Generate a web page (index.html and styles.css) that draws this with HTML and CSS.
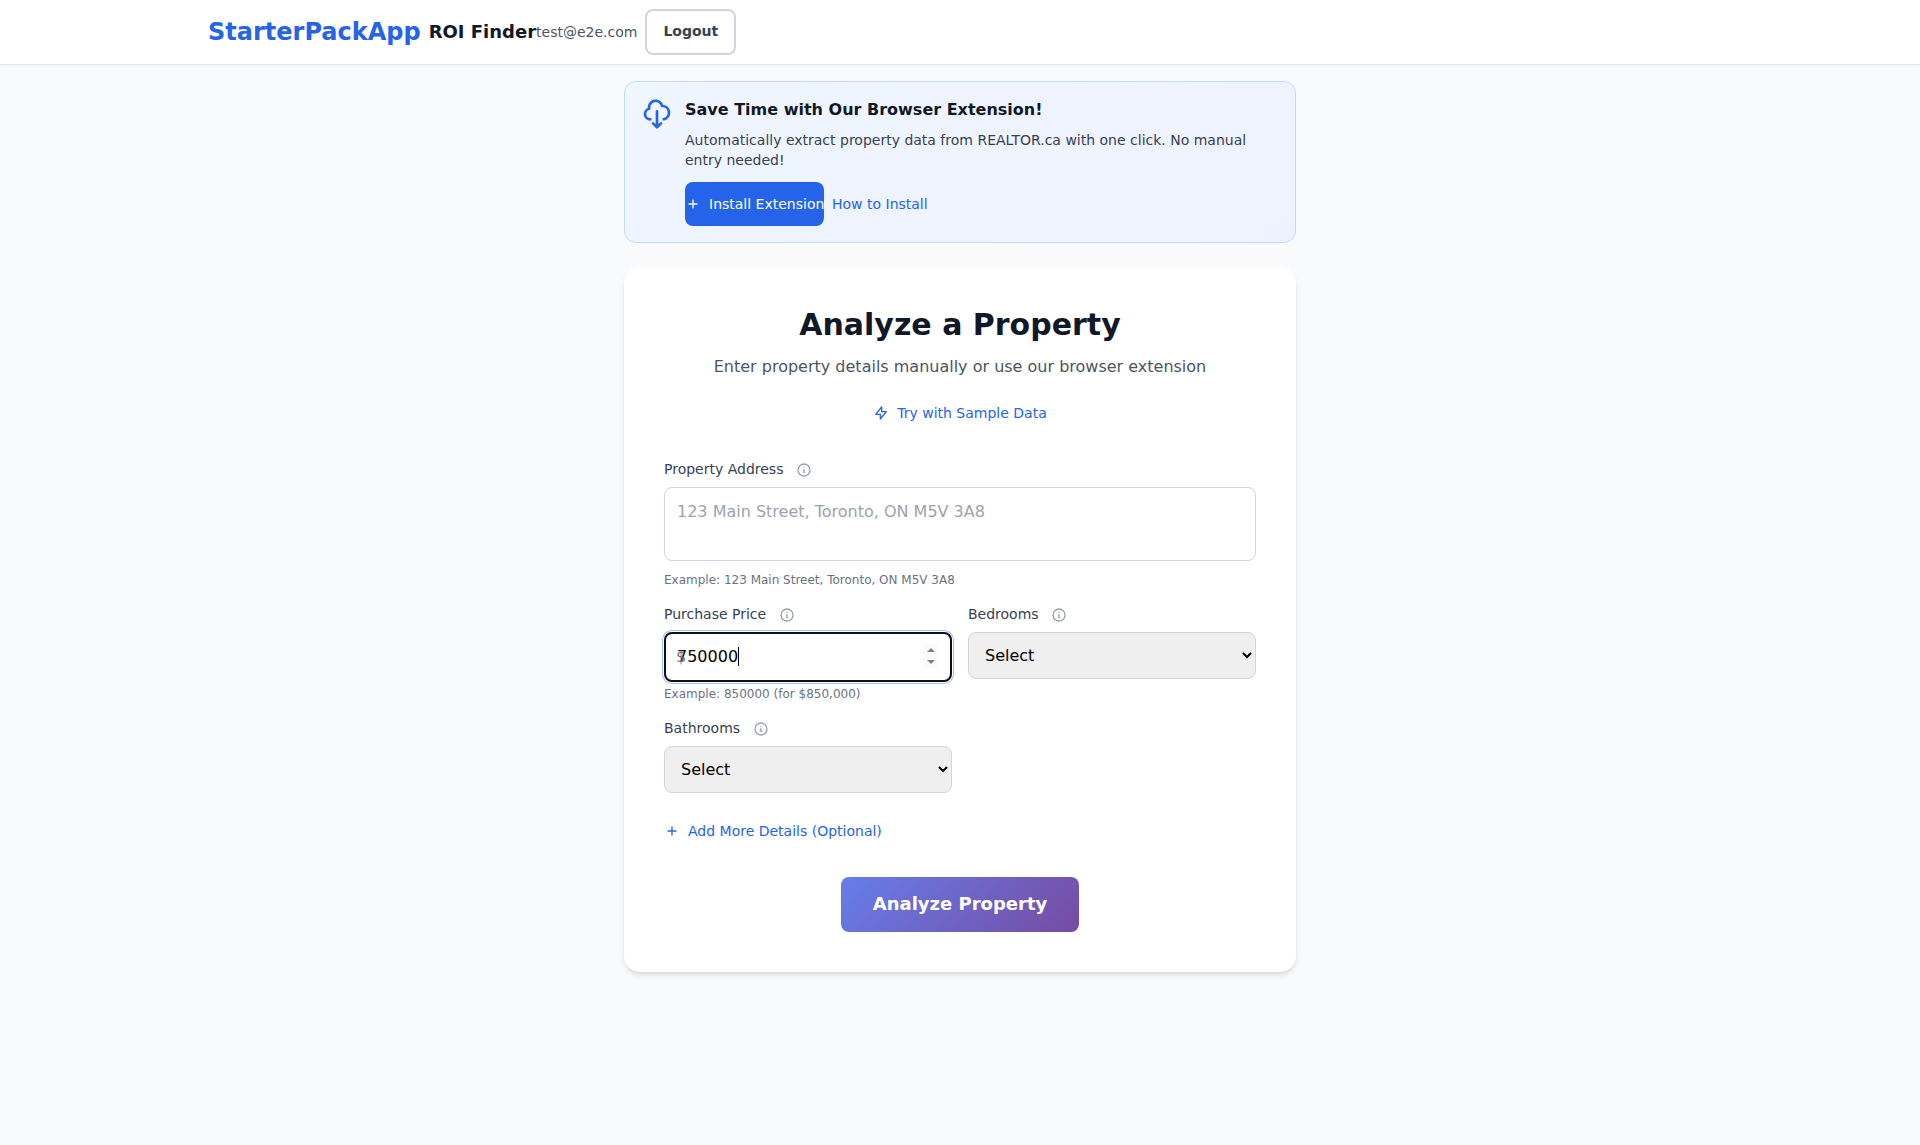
FILE: index.html
```html
<!DOCTYPE html>
<html lang="en">
<head>
<meta charset="utf-8">
<title>ROI Finder</title>
<link rel="stylesheet" href="styles.css">
</head>
<body>
<svg class="defs" width="0" height="0" aria-hidden="true">
  <symbol id="info" viewBox="0 0 24 24"><path d="M13 16h-1v-4h-1m1-4h.01M21 12a9 9 0 11-18 0 9 9 0 0118 0z"/></symbol>
  <symbol id="plus" viewBox="0 0 24 24"><path d="M12 6v6m0 0v6m0-6h6m-6 0H6"/></symbol>
  <symbol id="bolt" viewBox="0 0 24 24"><path d="M13 10V3L4 14h7v7l9-11h-7z"/></symbol>
  <symbol id="cloud" viewBox="0 0 24 24"><path d="M7 16a4 4 0 01-.88-7.903A5 5 0 1115.9 6L16 6a5 5 0 011 9.9M9 19l3 3m0 0l3-3m-3 3V10"/></symbol>
</svg>
<header class="header">
  <div class="header-inner">
    <a class="brand">StarterPackApp</a>
    <span class="product">ROI Finder</span>
    <span class="email">test@e2e.com</span>
    <button class="logout">Logout</button>
  </div>
</header>
<main class="main">
  <section class="banner">
    <svg class="icon banner-icon"><use href="#cloud"/></svg>
    <div class="banner-body">
      <h3 class="banner-title">Save Time with Our Browser Extension!</h3>
      <p class="banner-text">Automatically extract property data from REALTOR.ca with one click. No manual entry needed!</p>
      <div class="banner-actions">
        <a class="install"><svg class="icon small"><use href="#plus"/></svg><span>Install Extension</span></a>
        <a class="link">How to Install</a>
      </div>
    </div>
  </section>
  <section class="card">
    <h2 class="card-title">Analyze a Property</h2>
    <p class="card-subtitle">Enter property details manually or use our browser extension</p>
    <a class="sample link"><svg class="icon small"><use href="#bolt"/></svg>Try with Sample Data</a>
    <form class="form">
      <div class="field">
        <label class="label">Property Address<svg class="icon info"><use href="#info"/></svg></label>
        <textarea class="control address" placeholder="123 Main Street, Toronto, ON M5V 3A8"></textarea>
        <p class="hint">Example: 123 Main Street, Toronto, ON M5V 3A8</p>
      </div>
      <div class="grid">
        <div class="field">
          <label class="label">Purchase Price<svg class="icon info"><use href="#info"/></svg></label>
          <div class="price-wrap">
            <span class="currency">$</span>
            <div class="control price"><span class="amount">750000</span><span class="spinner"><i class="up"></i><i class="down"></i></span></div>
          </div>
          <p class="hint">Example: 850000 (for $850,000)</p>
        </div>
        <div class="field">
          <label class="label">Bedrooms<svg class="icon info"><use href="#info"/></svg></label>
          <select class="control select"><option>Select</option></select>
        </div>
        <div class="field">
          <label class="label">Bathrooms<svg class="icon info"><use href="#info"/></svg></label>
          <select class="control select"><option>Select</option></select>
        </div>
      </div>
      <a class="more link"><svg class="icon small"><use href="#plus"/></svg>Add More Details (Optional)</a>
      <button class="submit" type="button">Analyze Property</button>
    </form>
  </section>
</main>
</body>
</html>
```

FILE: styles.css
```css
* { box-sizing: border-box; margin: 0; }
body {
  min-height: 100vh;
  background: #f9fafb;
  color: #111827;
  font: 16px/24px "DejaVu Sans", sans-serif;
}
.defs { display: block; }
.header { background: #fff; border-bottom: 1px solid #e5e7eb; box-shadow: 0 1px 2px rgba(0, 0, 0, .05); }
.header-inner { width: 1536px; height: 64px; margin: 0 auto; padding: 0 16px; display: flex; align-items: center; }
.brand { margin-right: 8px; font-size: 24px; line-height: 32px; font-weight: 700; color: #2563eb; }
.product { font-size: 18px; line-height: 28px; font-weight: 700; }
.email { margin-right: 8px; font-size: 14px; line-height: 20px; color: #4b5563; }
.logout { height: 46px; padding: 0 16px 2px; border: 2px solid #d1d5db; border-radius: 8px; background: #fff; color: #374151; font: 700 14px/20px "DejaVu Sans", sans-serif; }
.icon { flex: none; fill: none; stroke: currentColor; stroke-width: 2; stroke-linecap: round; stroke-linejoin: round; }
.small { width: 16px; height: 16px; margin-right: 8px; }
.main { width: 672px; margin: 16px auto 0; }
.banner { display: flex; gap: 12px; padding: 16px; margin-bottom: 24px; border: 1px solid #bfdbfe; border-radius: 12px; background: linear-gradient(135deg, #eff6ff, #eef2ff); }
.banner-icon { width: 32px; height: 32px; color: #2563eb; }
.banner-body { flex: 1; }
.banner-title { margin-bottom: 8px; font-size: 16px; line-height: 24px; }
.banner-text { margin-bottom: 12px; font-size: 14px; line-height: 20px; color: #374151; }
.banner-actions { display: flex; align-items: center; gap: 8px; }
.install { width: 139px; height: 44px; display: flex; align-items: center; border-radius: 8px; background: #2563eb; color: #fff; font-size: 14px; white-space: nowrap; }
.link { font-size: 14px; line-height: 20px; color: #2563eb; }
.card { display: flex; flex-direction: column; padding: 40px; border-radius: 16px; background: #fff; box-shadow: 0 4px 6px -1px rgba(0, 0, 0, .1), 0 2px 4px -2px rgba(0, 0, 0, .1); }
.card-title { margin-bottom: 12px; font-size: 30px; line-height: 36px; text-align: center; }
.card-subtitle { color: #4b5563; text-align: center; }
.sample { display: flex; align-items: center; justify-content: center; margin: 24px 0 36px; }
.form { display: flex; flex-direction: column; }
.label { display: flex; align-items: center; height: 20px; margin-bottom: 8px; font-size: 14px; color: #374151; }
.info { width: 16px; height: 16px; margin: 2px 0 0 12.5px; color: #9ca3af; }
.control { display: block; width: 100%; border: 1px solid #d1d5db; border-radius: 8px; font: 16px/24px "DejaVu Sans", sans-serif; }
.address { height: 74px; padding: 12px; resize: none; background: #fff; }
.address::placeholder { color: #9ca3af; }
.hint { font-size: 12px; line-height: 16px; color: #6b7280; }
.address + .hint { margin-top: 11px; }
.grid { display: grid; grid-template-columns: 1fr 1fr; gap: 16px; margin-top: 16px; }
.price-wrap { position: relative; }
.price { display: flex; align-items: center; justify-content: space-between; height: 50px; padding: 0 13px 2px 12px; color: #000; outline: 2px solid #101010; outline-offset: -2px; box-shadow: 0 0 0 1px #fff, 0 0 0 2px #9dc1fb; }
.amount { border-right: 1px solid #000; line-height: 19px; }
.currency { position: absolute; left: 12px; top: 13px; color: #6b7280; }
.spinner { display: flex; flex-direction: column; align-items: center; justify-content: center; gap: 8px; width: 15px; height: 24px; background: #fafafa; }
.up, .down { border: 4px solid transparent; border-top: 0; border-bottom: 4px solid #808080; }
.down { transform: rotate(180deg); }
.price-wrap + .hint { margin-top: 4px; }
.select { height: 47px; padding: 0 12px; background: #efefef; color: #000; }
.more { display: flex; align-items: center; margin: 28px 0 36px; }
.submit { align-self: center; width: 238px; height: 55px; padding: 0 0 2px; border: 0; border-radius: 8px; background: linear-gradient(135deg, #667eea, #764ba2); color: #fff; font: 700 18px/28px "DejaVu Sans", sans-serif; }
```
